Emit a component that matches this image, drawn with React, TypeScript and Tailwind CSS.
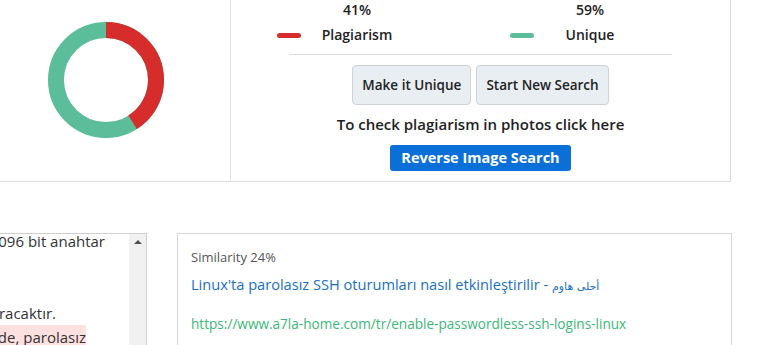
import React from 'react';

const font = { fontFamily: '"Open Sans", "Noto Sans", sans-serif' };

const Donut: React.FC<{ percent: number }> = ({ percent }) => {
  const r = 50;
  const c = 2 * Math.PI * r;
  const red = (percent / 100) * c;
  return (
    <svg width="116" height="116" viewBox="0 0 116 116">
      <circle cx="58" cy="58" r={r} fill="none" stroke="#5cbd9a" strokeWidth="16" />
      <circle
        cx="58"
        cy="58"
        r={r}
        fill="none"
        stroke="#d62c2c"
        strokeWidth="16"
        strokeDasharray={`${red} ${c}`}
        transform="rotate(-90 58 58)"
      />
    </svg>
  );
};

const LegendItem: React.FC<{ pct: string; label: string; color: string; width: string }> = ({ pct, label, color, width }) => (
  <div className={`flex items-end ${width}`}>
    <div className={`w-6 h-[5px] rounded-full mb-[9px] ${color}`} />
    <div className="w-[112px] text-center font-semibold text-[14px] text-[#222]">
      <div className="leading-[20px]">{pct}</div>
      <div className="leading-[24px] mt-[3px]">{label}</div>
    </div>
  </div>
);

// text lines of the scrolled textarea, cut off on the left
const lines: { text: string; end: string; mark?: boolean }[] = [
  { text: 'sırasında 4096 bit anahtar', end: 'w-[105px]' },
  { text: '', end: 'w-[105px]' },
  { text: '', end: 'w-[105px]' },
  { text: 'yeni bir anahtar oluşturacaktır.', end: 'w-[56px]' },
  { text: 'Bu şekilde, parolasız', end: 'w-[86px]', mark: true },
];

export default function App() {
  return (
    <div className="w-[768px] h-[345px] overflow-hidden bg-white text-[#222]" style={font}>
      {/* result panel */}
      <div className="w-[731px] h-[182px] flex border-r border-b border-[#dcdcdc]">
        <div className="w-[231px] shrink-0 border-r border-[#e3e3e3] pl-[48px] pt-[22px]">
          <Donut percent={41} />
        </div>
        <div className="flex-1 flex flex-col">
          <div className="flex pl-[46px]">
            <LegendItem pct="41%" label="Plagiarism" color="bg-[#d62c2c]" width="w-[233px]" />
            <LegendItem pct="59%" label="Unique" color="bg-[#5cbd9a]" width="w-[160px]" />
          </div>
          <div className="ml-[58px] w-[383px] h-px bg-[#dedede] mt-[7px]" />
          <div className="flex justify-center gap-[5px] mt-[10px]">
            <button className="h-[40px] px-[9px] rounded-[4px] border border-[#cdd3d9] bg-[#e9eef3] text-[13.5px] font-semibold text-[#222]">
              Make it Unique
            </button>
            <button className="h-[40px] px-[9px] rounded-[4px] border border-[#cdd3d9] bg-[#e9eef3] text-[13.5px] font-semibold text-[#222]">
              Start New Search
            </button>
          </div>
          <div className="text-center text-[15px] font-semibold leading-[20px] mt-[9px]">
            To check plagiarism in photos click here
          </div>
          <div className="flex justify-center mt-[11px]">
            <button className="h-[26px] px-[11px] rounded-[3px] bg-[#0b6fd8] text-white text-[14.5px] font-bold leading-[26px]">
              Reverse Image Search
            </button>
          </div>
        </div>
      </div>

      {/* matches */}
      <div className="flex gap-[30px] mt-[51px]">
        <div className="relative w-[147px] h-[120px] shrink-0 border-r border-t border-[#cfcfcf] overflow-hidden">
          <div className="-mt-[5px] text-[15px] leading-[24px] text-[#333]">
            {lines.map((l, i) => (
              <div key={i} className={`flex justify-end whitespace-nowrap h-[24px] ${l.end}`}>
                <span className={l.mark ? 'bg-[#fde0e0]' : ''}>{l.text}</span>
              </div>
            ))}
          </div>
          <div className="absolute right-0 top-0 bottom-0 w-[17px] bg-[#f1f1f1] flex justify-center pt-[6px]">
            <div className="w-0 h-0 border-l-[4px] border-r-[4px] border-b-[4px] border-l-transparent border-r-transparent border-b-[#505050]" />
          </div>
        </div>
        <div className="w-[555px] h-[120px] border border-[#d6d6d6] pl-[13px] pt-[13px]">
          <div className="text-[13px] leading-[20px] text-[#555]">Similarity 24%</div>
          <div className="text-[14.6px] leading-[20px] text-[#1a6fc4] mt-[7px]">
            Linux'ta parolasız SSH oturumları nasıl etkinleştirilir - <span style={{ fontFamily: '"DejaVu Sans", sans-serif' }} className="text-[11px]">أحلى هاوم</span>
          </div>
          <div className="text-[13.6px] leading-[20px] text-[#3cb878] mt-[17px]">
            https://www.a7la-home.com/tr/enable-passwordless-ssh-logins-linux
          </div>
        </div>
      </div>
    </div>
  );
}
